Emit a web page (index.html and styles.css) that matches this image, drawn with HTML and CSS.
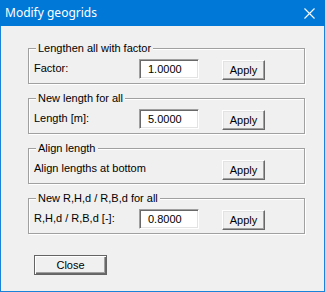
FILE: index.html
```html
<!DOCTYPE html>
<html>
<head>
<meta charset="utf-8">
<link rel="stylesheet" href="styles.css">
</head>
<body>
<div class="window">
  <div class="titlebar">
    <span class="title">Modify geogrids</span>
    <svg class="xicon" width="11" height="11" viewBox="0 0 11 11"><path d="M0.5 0.5 L10.5 10.5 M10.5 0.5 L0.5 10.5" stroke="#fff" stroke-width="1.1" fill="none"/></svg>
  </div>
  <div class="content">
    <div class="group">
      <div class="cap">Lengthen all with factor</div>
      <div class="row">
        <span class="label">Factor:</span>
        <input class="field" type="text" value="1.0000" readonly>
        <button class="btn apply">Apply</button>
      </div>
    </div>
    <div class="group">
      <div class="cap">New length for all</div>
      <div class="row">
        <span class="label">Length [m]:</span>
        <input class="field" type="text" value="5.0000" readonly>
        <button class="btn apply">Apply</button>
      </div>
    </div>
    <div class="group">
      <div class="cap">Align length</div>
      <div class="row">
        <span class="label wide">Align lengths at bottom</span>
        <button class="btn apply">Apply</button>
      </div>
    </div>
    <div class="group">
      <div class="cap">New R,H,d / R,B,d for all</div>
      <div class="row">
        <span class="label">R,H,d / R,B,d [-]:</span>
        <input class="field" type="text" value="0.8000" readonly>
        <button class="btn apply">Apply</button>
      </div>
    </div>
    <button class="btn close">Close</button>
  </div>
</div>
</body>
</html>
```

FILE: styles.css
```css
html, body {
  margin: 0;
  padding: 0;
  background: #f0f0f0;
}
.window {
  width: 325px;
  height: 292px;
  box-sizing: border-box;
  border: 1px solid #1a82d8;
  border-top: none;
  background: #f0f0f0;
  font-family: "Liberation Sans", Arial, sans-serif;
  font-size: 11px;
  color: #000;
}
.titlebar {
  height: 26px;
  margin: 0 -1px;
  background: #0078d7;
  display: flex;
  align-items: center;
  justify-content: space-between;
  padding: 0 10px 0 5px;
}
.title {
  font-family: "Noto Sans", "Open Sans", sans-serif;
  font-size: 12px;
  color: #fff;
  margin-top: -1px;
}
.xicon {
  display: block;
  margin-top: 1px;
}
.content {
  padding: 22px 19px 0 27px;
  display: flex;
  flex-direction: column;
}
.group {
  border: 1px solid #a0a0a0;
  box-shadow: inset 1px 1px 0 #fff, 1px 1px 0 #fff;
  width: 277px;
  box-sizing: border-box;
  margin-bottom: 14px;
  padding: 0 0 4px 5px;
}
.cap {
  width: fit-content;
  margin: -7px 0 0 2px;
  padding: 0 2px;
  line-height: 13px;
  background: #f0f0f0;
}
.row {
  display: flex;
  align-items: center;
  margin-top: 4px;
  height: 20px;
}
.label {
  width: 105px;
  flex: none;
  margin-top: -3px;
}
.label.wide {
  width: 165px;
}
.field {
  width: 60px;
  height: 20px;
  box-sizing: border-box;
  margin: 0;
  padding: 0 0 0 8px;
  border: 1px solid;
  border-color: #a0a0a0 #fff #fff #a0a0a0;
  box-shadow: inset 1px 1px 0 #696969, inset -1px -1px 0 #e3e3e3;
  background: #fff;
  font-family: "Liberation Sans", Arial, sans-serif;
  font-size: 11px;
  color: #000;
  outline: none;
}
.btn {
  margin: 0;
  padding: 0;
  box-sizing: border-box;
  background: #f0f0f0;
  font-family: "Liberation Sans", Arial, sans-serif;
  font-size: 11px;
  color: #000;
  border: 1px solid;
  border-color: #fff #696969 #696969 #fff;
  box-shadow: inset -1px -1px 0 #a0a0a0, inset 1px 1px 0 #e3e3e3;
}
.apply {
  width: 43px;
  height: 20px;
  margin-left: 23px;
  margin-top: 2px;
}
.close {
  width: 73px;
  height: 20px;
  margin: 7px 0 0 6px;
  border: 1px solid #646464;
  box-shadow: inset 1px 1px 0 #fff, inset -1px -1px 0 #696969, inset -2px -2px 0 #a0a0a0;
}
```
